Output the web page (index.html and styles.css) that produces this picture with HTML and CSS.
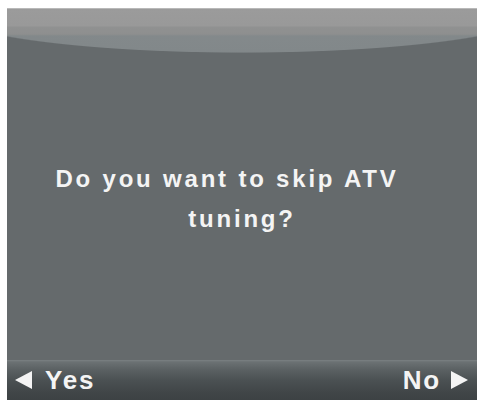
FILE: index.html
```html
<!DOCTYPE html>
<html>
<head>
<meta charset="utf-8">
<link rel="stylesheet" href="styles.css">
</head>
<body>
<div class="screen">
  <div class="message">
    <p>Do you want to skip ATV<br>tuning?</p>
  </div>
  <div class="bar">
    <span class="opt"><span class="tri tri-left"></span>Yes</span>
    <span class="opt">No<span class="tri tri-right"></span></span>
  </div>
</div>
</body>
</html>
```
FILE: styles.css
```css
html, body {
  margin: 0;
  padding: 0;
  background: #ffffff;
}
body {
  padding: 8px 4px 4px 7px;
  font-family: "Liberation Sans", Arial, sans-serif;
}
.screen {
  width: 470px;
  height: 392px;
  display: flex;
  flex-direction: column;
  background:
    linear-gradient(to bottom, #9b9b9b 0px, #999999 17px, #909191 18px, #8e8f8f 25px, rgba(142,143,143,0) 27px),
    radial-gradient(ellipse 305px 44px at 50% 0, #868b8d 0%, #82888a 98%, #656a6c 100%) no-repeat,
    #656a6c;
  border-top: 1px solid #b8b8b8;
  box-sizing: border-box;
}
.message {
  flex: 1;
  display: flex;
  align-items: center;
  justify-content: center;
  padding-top: 28px;
}
.message p {
  width: 100%;
  margin: 0;
  color: #f4f4f4;
  font-weight: bold;
  font-size: 24px;
  letter-spacing: 2.8px;
  line-height: 40px;
  text-align: center;
  text-indent: -30px;
}
.bar {
  height: 40px;
  display: flex;
  align-items: center;
  justify-content: space-between;
  padding: 0 9px 0 8px;
  background: linear-gradient(to bottom, #7b8183 0px, #6b7173 2px, #5a6062 10px, #4b5153 20px, #414648 32px, #3d4244 40px);
  color: #f4f4f4;
  font-weight: bold;
  font-size: 26px;
  line-height: 38px;
  letter-spacing: 1.8px;
}
.opt {
  display: flex;
  align-items: center;
}
.tri {
  width: 0;
  height: 0;
  border-top: 9px solid transparent;
  border-bottom: 9px solid transparent;
}
.tri-left {
  border-right: 17px solid #f4f4f4;
  margin-right: 13px;
}
.tri-right {
  border-left: 17px solid #f4f4f4;
  margin-left: 10px;
}
```
